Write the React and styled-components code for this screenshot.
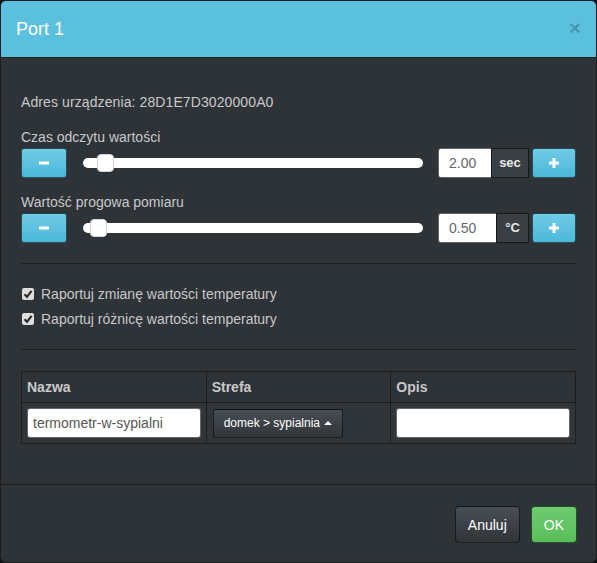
import React from 'react';
import styled, { createGlobalStyle } from 'styled-components';

const GlobalStyle = createGlobalStyle`
  html, body {
    margin: 0;
    padding: 0;
    background: #0e1012;
  }
  body {
    font-family: "Liberation Sans", Arial, sans-serif;
    font-size: 14px;
    line-height: 20px;
    color: #c8c8c8;
  }
  * { box-sizing: border-box; }
`;

const Modal = styled.div`
  width: 597px;
  height: 563px;
  background: #2e3338;
  border: 1px solid #1c1e22;
  border-radius: 6px;
  overflow: hidden;
  display: flex;
  flex-direction: column;
`;

const Header = styled.div`
  height: 57px;
  padding: 0 15px;
  background: #5bc0de;
  border-bottom: 1px solid #1c1e22;
  display: flex;
  align-items: center;
  justify-content: space-between;
`;

const Title = styled.h4`
  margin: 0;
  font-size: 18px;
  font-weight: normal;
  color: #fff;
`;

const Close = styled.button`
  border: 0;
  background: none;
  padding: 0;
  font-family: "Liberation Sans", Arial, sans-serif;
  font-size: 21px;
  font-weight: bold;
  line-height: 1;
  color: rgba(0, 0, 0, 0.22);
  margin-top: -4px;
  cursor: pointer;
`;

const Body = styled.div`
  flex: 1;
  padding: 34px 20px 40px;
`;

const Line = styled.div`
  line-height: 20px;
  letter-spacing: 0.1px;
`;

const Field = styled.div`
  margin-top: ${(p) => p.$top}px;
`;

const Label = styled.div`
  line-height: 20px;
  margin-bottom: 1px;
`;

const ControlRow = styled.div`
  display: flex;
  align-items: center;
  height: 30px;
`;

const InfoButton = styled.button`
  width: ${(p) => p.$w}px;
  height: 30px;
  padding: 0;
  border: 1px solid rgba(0, 0, 0, 0.6);
  border-radius: 3px;
  background: linear-gradient(#6fcbe5, #5bc0de 60%, #4ab9d8);
  display: flex;
  align-items: center;
  justify-content: center;
  cursor: pointer;
`;

const Track = styled.div`
  position: relative;
  flex: 1;
  height: 10px;
  margin: 0 15px 0 16px;
  background: #fff;
  border-radius: 5px;
`;

const Thumb = styled.span`
  position: absolute;
  top: -4px;
  width: 17px;
  height: 18px;
  background: #fff;
  border: 1px solid #d4d4d4;
  border-radius: 4px;
`;

const InputGroup = styled.div`
  display: flex;
  height: 30px;
  margin-right: 3px;
`;

const GroupInput = styled.input`
  width: ${(p) => p.$w}px;
  height: 30px;
  padding: 0 10px;
  border: 1px solid rgba(0, 0, 0, 0.6);
  border-right: 0;
  border-radius: 3px 0 0 3px;
  background: #fff;
  color: #666;
  font-family: "Liberation Sans", Arial, sans-serif;
  font-size: 14px;
  outline: none;
`;

const Addon = styled.span`
  display: flex;
  align-items: center;
  justify-content: center;
  width: ${(p) => p.$w}px;
  height: 30px;
  background: #3a3f44;
  border: 1px solid rgba(0, 0, 0, 0.6);
  color: #e8e8e8;
  font-size: 13px;
  font-weight: bold;
`;

const Rule = styled.hr`
  margin: ${(p) => p.$top}px 0 ${(p) => p.$bottom}px;
  border: 0;
  border-top: 1px solid #1c1e22;
`;

const CheckRow = styled.label`
  display: flex;
  align-items: center;
  height: 20px;
  margin-top: ${(p) => p.$top}px;
  padding-left: 1px;
`;

const CheckBox = styled.span`
  width: 12px;
  height: 12px;
  margin-right: 7px;
  background: #dedede;
  border-radius: 2px;
  display: flex;
  align-items: center;
  justify-content: center;
`;

const Table = styled.table`
  width: 100%;
  border-collapse: collapse;
  table-layout: fixed;
  border: 1px solid #1c1e22;
`;

const Th = styled.th`
  padding: 5px;
  text-align: left;
  font-weight: bold;
  line-height: 20px;
  color: #c8c8c8;
  border: 1px solid #1c1e22;
`;

const Td = styled.td`
  padding: 5px;
  border: 1px solid #1c1e22;
  background: #30353a;
`;

const CellInput = styled.input`
  display: block;
  width: 100%;
  height: 30px;
  padding: 0 5px;
  border: 1px solid rgba(0, 0, 0, 0.6);
  border-radius: 3px;
  background: #fff;
  color: #555;
  font-family: "Liberation Sans", Arial, sans-serif;
  font-size: 14px;
  outline: none;
`;

const DropButton = styled.button`
  height: 29px;
  margin: 0 0 0 1px;
  padding: 0 10px;
  display: inline-flex;
  align-items: center;
  gap: 4px;
  border: 1px solid rgba(0, 0, 0, 0.6);
  border-radius: 3px;
  background: linear-gradient(#484e55, #3a3f44 60%, #313539);
  color: #fff;
  font-family: "Liberation Sans", Arial, sans-serif;
  font-size: 12px;
  cursor: pointer;
`;

const CaretUp = styled.span`
  width: 0;
  height: 0;
  border-left: 4px solid transparent;
  border-right: 4px solid transparent;
  border-bottom: 4px solid #fff;
`;

const Footer = styled.div`
  border-top: 1px solid #1c1e22;
  padding: 21px 19px 19px;
  display: flex;
  justify-content: flex-end;
  gap: 11px;
`;

const FooterButton = styled.button`
  height: 37px;
  min-width: 44px;
  padding: 0 12px;
  border: 1px solid rgba(0, 0, 0, 0.6);
  border-radius: 4px;
  background: ${(p) =>
    p.$ok
      ? 'linear-gradient(#6fca6f, #62c462 60%, #57bf57)'
      : 'linear-gradient(#484e55, #3a3f44 60%, #313539)'};
  color: #fff;
  font-family: "Liberation Sans", Arial, sans-serif;
  font-size: 14px;
  cursor: pointer;
`;

const MinusIcon = () => (
  <svg width="10" height="10" viewBox="0 0 10 10">
    <rect x="0" y="3.5" width="10" height="3" fill="#fff" />
  </svg>
);

const PlusIcon = () => (
  <svg width="10" height="10" viewBox="0 0 10 10">
    <rect x="0" y="3.5" width="10" height="3" fill="#fff" />
    <rect x="3.5" y="0" width="3" height="10" fill="#fff" />
  </svg>
);

const CheckIcon = () => (
  <svg width="10" height="10" viewBox="0 0 10 10">
    <path d="M1.5 5.2 L4 7.8 L8.6 1.8" stroke="#2a2d31" strokeWidth="2.2" fill="none" />
  </svg>
);

const SliderField = ({ label, top, value, unit, inputW, addonW, pct }) => (
  <Field $top={top}>
    <Label>{label}</Label>
    <ControlRow>
      <InfoButton $w={46} type="button">
        <MinusIcon />
      </InfoButton>
      <Track>
        <Thumb style={{ left: `calc(${pct} * (100% - 17px))` }} />
      </Track>
      <InputGroup>
        <GroupInput $w={inputW} defaultValue={value} />
        <Addon $w={addonW}>{unit}</Addon>
      </InputGroup>
      <InfoButton $w={44} type="button">
        <PlusIcon />
      </InfoButton>
    </ControlRow>
  </Field>
);

export default function App() {
  return (
    <>
      <GlobalStyle />
      <Modal>
        <Header>
          <Title>Port 1</Title>
          <Close type="button">×</Close>
        </Header>
        <Body>
          <Line>Adres urządzenia: 28D1E7D3020000A0</Line>
          <SliderField label="Czas odczytu wartości" top={15} value="2.00" unit="sec" inputW={53} addonW={38} pct={0.043} />
          <SliderField label="Wartość progowa pomiaru" top={14} value="0.50" unit="°C" inputW={58} addonW={33} pct={0.022} />
          <Rule $top={20} $bottom={20} />
          <CheckRow $top={0}>
            <CheckBox><CheckIcon /></CheckBox>
            Raportuj zmianę wartości temperatury
          </CheckRow>
          <CheckRow $top={5}>
            <CheckBox><CheckIcon /></CheckBox>
            Raportuj różnicę wartości temperatury
          </CheckRow>
          <Rule $top={20} $bottom={21} />
          <Table>
            <thead>
              <tr>
                <Th>Nazwa</Th>
                <Th>Strefa</Th>
                <Th>Opis</Th>
              </tr>
            </thead>
            <tbody>
              <tr>
                <Td><CellInput defaultValue="termometr-w-sypialni" /></Td>
                <Td>
                  <DropButton type="button">
                    domek &gt; sypialnia <CaretUp />
                  </DropButton>
                </Td>
                <Td><CellInput defaultValue="" /></Td>
              </tr>
            </tbody>
          </Table>
        </Body>
        <Footer>
          <FooterButton type="button">Anuluj</FooterButton>
          <FooterButton type="button" $ok>OK</FooterButton>
        </Footer>
      </Modal>
    </>
  );
}
